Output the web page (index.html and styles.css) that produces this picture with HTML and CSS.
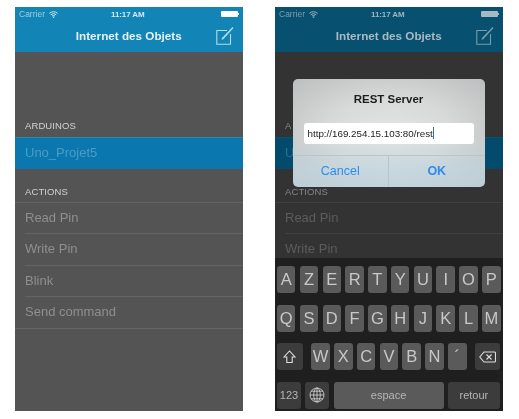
FILE: index.html
```html
<!DOCTYPE html>
<html lang="fr">
<head>
<meta charset="utf-8">
<title>Internet des Objets</title>
<link rel="stylesheet" href="styles.css">
</head>
<body>
<svg class="defs" width="0" height="0" aria-hidden="true">
  <symbol id="wifi" viewBox="0 0 12 9"><path d="M.5 3a8 8 0 0 1 11 0M2.300 4.900a5.400 5.400 0 0 1 7.400 0M4 6.600a3 3 0 0 1 4 0" fill="none" stroke="currentColor" stroke-width="1.300"/><circle cx="6" cy="8" r="1" fill="currentColor"/></symbol>
  <symbol id="compose" viewBox="0 0 18 19"><path d="M11 4.500H.8v13.700h13.700V8" fill="none" stroke="currentColor" stroke-width="1.100"/><path d="M6 12 16.500 1l1 1L7.300 13.200 5.500 13.800z" fill="currentColor"/></symbol>
</svg>
<main class="phone">
  <header class="nav">
    <div class="status"><span class="carrier">Carrier</span><svg class="wifi"><use href="#wifi"/></svg><span class="time">11:17 AM</span><span class="battery"></span></div>
    <div class="navbar"><h1>Internet des Objets</h1><svg class="compose"><use href="#compose"/></svg></div>
  </header>
  <h2 class="section first">ARDUINOS</h2>
  <div class="selected">Uno_Projet5</div>
  <h2 class="section second">ACTIONS</h2>
  <ul class="list">
    <li>Read Pin</li>
    <li>Write Pin</li>
    <li>Blink</li>
    <li>Send command</li>
  </ul>
</main>
<main class="phone dim">
  <header class="nav">
    <div class="status"><span class="carrier">Carrier</span><svg class="wifi"><use href="#wifi"/></svg><span class="time">11:17 AM</span><span class="battery"></span></div>
    <div class="navbar"><h1>Internet des Objets</h1><svg class="compose"><use href="#compose"/></svg></div>
  </header>
  <h2 class="section first">A</h2>
  <div class="selected">U</div>
  <h2 class="section second">ACTIONS</h2>
  <ul class="list">
    <li>Read Pin</li>
    <li>Write Pin</li>
  </ul>
  <section class="alert">
    <h3>REST Server</h3>
    <div class="field">http://169.254.15.103:80/rest<span class="caret"></span></div>
    <div class="actions"><button class="btn">Cancel</button><button class="btn ok">OK</button></div>
  </section>
  <section class="keyboard">
    <div class="row">
      <span class="key">A</span><span class="key">Z</span><span class="key">E</span><span class="key">R</span><span class="key">T</span><span class="key">Y</span><span class="key">U</span><span class="key">I</span><span class="key">O</span><span class="key">P</span>
    </div>
    <div class="row">
      <span class="key">Q</span><span class="key">S</span><span class="key">D</span><span class="key">F</span><span class="key">G</span><span class="key">H</span><span class="key">J</span><span class="key">K</span><span class="key">L</span><span class="key">M</span>
    </div>
    <div class="row">
      <span class="key dark shift"><svg width="13" height="14" viewBox="0 0 13 14"><path d="M6.500 1 1 7h2.800v5.500h5.400V7H12z" fill="none" stroke="#dedede" stroke-width="1.100"/></svg></span>
      <span class="key fixed lead">W</span><span class="key fixed">X</span><span class="key fixed">C</span><span class="key fixed">V</span><span class="key fixed">B</span><span class="key fixed">N</span><span class="key fixed accent">´</span>
      <span class="key dark del"><svg width="17" height="12" viewBox="0 0 17 12"><path d="M5 1h10.500a1 1 0 0 1 1 1v8a1 1 0 0 1-1 1H5L.8 6z" fill="none" stroke="#dedede" stroke-width="1.100"/><path d="m7.500 3.500 5 5m0-5-5 5" stroke="#dedede" stroke-width="1.100"/></svg></span>
    </div>
    <div class="row">
      <span class="key dark small num">123</span>
      <span class="key dark globe"><svg width="16" height="16" viewBox="0 0 16 16" fill="none" stroke="#d8d8d8" stroke-width=".8"><circle cx="8" cy="8" r="7"/><ellipse cx="8" cy="8" rx="3.300" ry="7"/><path d="M8 1v14M1 8h14M2 4.200h12M2 11.800h12"/></svg></span>
      <span class="key small space">espace</span>
      <span class="key dark small return">retour</span>
    </div>
  </section>
</main>
</body>
</html>
```
FILE: styles.css
```css
* { box-sizing: border-box; margin: 0; padding: 0; }
html, body { background: #fff; }
body {
  width: 519px;
  height: 419px;
  padding: 7px 0 0 15px;
  display: flex;
  gap: 32.5px;
  overflow: hidden;
  font-family: "Liberation Sans", Arial, sans-serif;
}
.defs { position: absolute; }

.phone {
  --bg: #545454;
  --nav: #1285b6;
  --status: #d5e8f1;
  --carrier: #9fcde2;
  --title: #e6f1f6;
  --label: #d2d2d2;
  --sel: #0a78ae;
  --sel-text: #4c9cc4;
  --row: #8f8f8f;
  --line: #646464;
  position: relative;
  width: 227.500px;
  height: 404px;
  background: var(--bg);
  overflow: hidden;
  filter: blur(.5px);
  flex: none;
}
.dim {
  --bg: #333;
  --nav: #07506f;
  --status: #a2b5bf;
  --carrier: #7f9cab;
  --title: #a9bac3;
  --label: #858585;
  --sel: #034b6c;
  --sel-text: #2f6f8e;
  --row: #5c5c5c;
  --line: #404040;
}

.nav { height: 45px; background: var(--nav); color: var(--title); }
.status { height: 14px; position: relative; display: flex; align-items: center; padding: 0 0 0 4px; font-size: 8.500px; }
.carrier { color: var(--carrier); }
.wifi { width: 9px; height: 7px; margin-left: 4px; color: var(--status); }
.time {
  position: absolute;
  left: 96px;
  color: var(--status);
  font-weight: 700;
  font-size: 8px;
  letter-spacing: -.1px;
}
.battery {
  position: absolute;
  right: 5px;
  top: 4px;
  width: 17px;
  height: 5.500px;
  border-radius: 1px;
  background: #fff;
}
.battery::after {
  content: "";
  position: absolute;
  right: -1.500px;
  top: 1.500px;
  width: 1.500px;
  height: 2.500px;
  background: inherit;
}
.dim .battery { background: #a8b8c0; }
.navbar { height: 31px; position: relative; display: flex; align-items: center; justify-content: center; padding-bottom: 2px; }
.navbar h1 { font-size: 11.700px; font-weight: 700; }
.compose { position: absolute; right: 8.500px; top: 5px; width: 18px; height: 19px; color: #b5dbea; }
.dim .compose { color: #7d9cab; }

.section {
  padding-left: 10px;
  font-size: 9.500px;
  font-weight: 400;
  line-height: 12px;
  color: var(--label);
  letter-spacing: .1px;
}
.first { margin-top: 68px; height: 17px; }
.selected {
  height: 31.500px;
  padding-left: 10px;
  background: var(--sel);
  border-top: 1px solid #2a85b2;
  line-height: 29px;
  font-size: 13px;
  color: var(--sel-text);
}
.dim .selected { border-top-color: #0c5270; }
.second { margin-top: 17px; height: 16px; }
.list { list-style: none; border-top: 1.500px solid var(--line); }
.list li {
  height: 31.500px;
  margin-left: 10px;
  border-bottom: 1px solid var(--line);
  line-height: 30px;
  font-size: 13px;
  color: var(--row);
}
.list li:nth-child(4) { margin-left: 0; padding-left: 10px; }

.alert {
  position: absolute;
  left: 17.500px;
  top: 71.500px;
  width: 192px;
  height: 108px;
  border-radius: 5px;
  background:
    linear-gradient(to bottom, rgba(190, 215, 228, 0) 55%, rgba(190, 215, 228, .6) 85%),
    radial-gradient(ellipse at 50% 50%, #e3e5e5 0, #d8dada 45%, #c6c8c8 80%, #bcbfc0 100%);
  overflow: hidden;
}
.alert h3 { margin-top: 12px; height: 17px; line-height: 16px; font-size: 11.500px; font-weight: 700; text-align: center; color: #1d1d1d; }
.field {
  margin: 15px 0 0 11px;
  width: 170px;
  height: 21px;
  padding-left: 4px;
  background: #fff;
  border-radius: 3px;
  font-size: 9.800px;
  line-height: 21px;
  color: #222;
  display: flex;
  align-items: center;
}
.caret { width: 1px; height: 12px; background: #2a6fc0; }
.actions { margin-top: 11px; display: flex; height: 32px; border-top: 1px solid #b8c5cb; }
.btn {
  flex: 1;
  border: 0;
  background: none;
  font: 12.500px "Liberation Sans", Arial, sans-serif;
  color: #2f8bf0;
}
.btn.ok { font-weight: 700; border-left: 1px solid #b8c5cb; }

.keyboard {
  position: absolute;
  left: 0;
  right: 0;
  bottom: 0;
  height: 153px;
  padding: 8px 2px 0;
  background: #1f1f1f;
  display: flex;
  flex-direction: column;
  gap: 11.500px;
}
.row { display: flex; gap: 4.300px; height: 27px; }
.key {
  flex: 1;
  min-width: 0;
  display: flex;
  align-items: center;
  justify-content: center;
  border-radius: 3px;
  background: #5a5a5a;
  font-size: 16.500px;
  color: #c8c8c8;
}
.key.fixed { flex: 0 0 18.500px; }
.key.lead { margin-left: 4.500px; }
.key.accent { margin-right: 4px; }
.key.dark { background: #3c3c3c; }
.key.small { font-size: 11px; color: #b5b5b5; }
.shift { flex: 0 0 25.500px; }
.del { flex: 0 0 25px; }
.num { flex: 0 0 24px; }
.globe { flex: 0 0 24px; }
.space { flex: 0 0 110px; }
.return { flex: 0 0 52px; }
```
